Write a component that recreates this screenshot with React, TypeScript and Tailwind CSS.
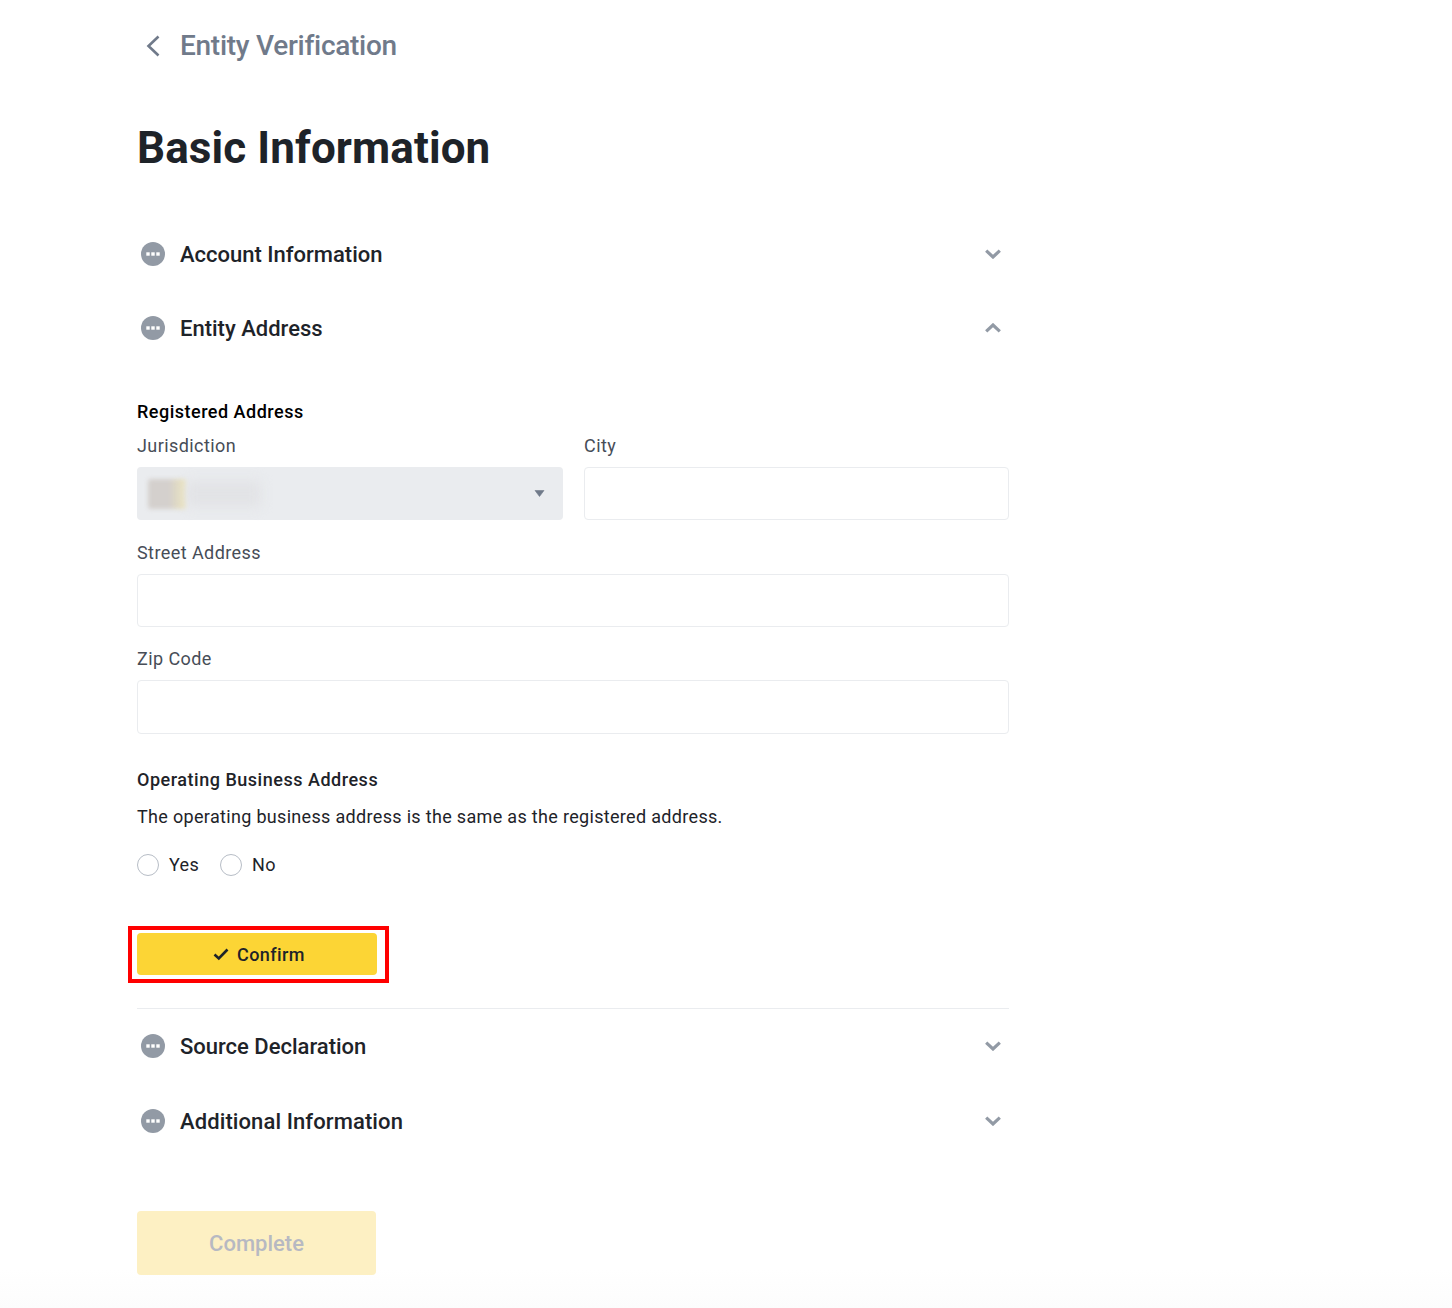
const F = "font-['Roboto','Liberation_Sans',sans-serif]";

function Dots() {
  return (
    <svg width="24" height="24" viewBox="0 0 24 24" className="shrink-0">
      <circle cx="12" cy="12" r="12" fill="#929aa5" />
      <rect x="5.3" y="10.3" width="3.4" height="3.4" fill="#fff" />
      <rect x="10.3" y="10.3" width="3.4" height="3.4" fill="#fff" />
      <rect x="15.3" y="10.3" width="3.4" height="3.4" fill="#fff" />
    </svg>
  );
}

function Chevron({ up }: { up?: boolean }) {
  return (
    <svg width="16" height="10" viewBox="0 0 16 10" className="shrink-0">
      <path d={up ? "M1.2 8.3L8 2L14.8 8.3" : "M1.2 1.7L8 8L14.8 1.7"} fill="none" stroke="#929aa5" strokeWidth="3.2" />
    </svg>
  );
}

function Section({ title, up, className }: { title: string; up?: boolean; className: string }) {
  return (
    <div className={`flex items-center pl-[4px] pr-[8px] ${className}`}>
      <Dots />
      <span className="ml-[15px] flex-1 pt-[2px] text-[22px] leading-[28px] font-medium text-[#1e2329]">{title}</span>
      <Chevron up={up} />
    </div>
  );
}

function Field({ label, className, boxClass }: { label: string; className?: string; boxClass?: string }) {
  return (
    <div className={className}>
      <div className="h-[22px] text-[18px] leading-[22px] tracking-[0.42px] text-[#474d57]">{label}</div>
      <div className={`mt-[10px] rounded-[4px] border border-[#eaecef] bg-white ${boxClass ?? "h-[53px]"}`} />
    </div>
  );
}

function Radio({ label }: { label: string }) {
  return (
    <div className="flex items-center">
      <span className="h-[22px] w-[22px] rounded-full border border-[#b7bdc6] bg-white" />
      <span className="ml-[10px] text-[18px] leading-[22px] tracking-[0.3px] text-[#1e2329]">{label}</span>
    </div>
  );
}

export default function App() {
  return (
    <div className={`${F} h-[1308px] w-[1452px] overflow-hidden bg-[linear-gradient(to_bottom,#ffffff_97%,#fcfcfc)] pl-[137px]`}>
      <div className="w-[872px]">
        <div className="mt-[32px] flex h-[28px] items-center pl-[9px]">
          <svg width="14" height="22" viewBox="0 0 14 22" className="shrink-0">
            <path d="M12.5 1.5L2.5 11L12.5 20.5" fill="none" stroke="#707a8a" strokeWidth="2.6" />
          </svg>
          <span className="ml-[20px] text-[28px] leading-[28px] font-medium tracking-[-0.27px] text-[#707a8a]">Entity Verification</span>
        </div>

        <h1 className="mt-[58px] text-[44px] leading-[60px] font-bold tracking-[0.1px] text-[#1e2329]">Basic Information</h1>

        <Section title="Account Information" className="mt-[62px] h-[28px]" />
        <Section title="Entity Address" up className="mt-[46px] h-[28px]" />

        <h2 className="mt-[58px] text-[18px] leading-[24px] font-medium tracking-[0.5px] text-black">Registered Address</h2>

        <div className="mt-[11px] grid grid-cols-[426px_425px] gap-x-[21px]">
          <div>
            <div className="h-[22px] text-[18px] leading-[22px] tracking-[0.42px] text-[#474d57]">Jurisdiction</div>
            <div className="mt-[10px] flex h-[53px] items-center rounded-[4px] bg-[#eaecef] pl-[11px] pr-[18px]">
              <div className="h-[30px] w-[38px] rounded-[3px] bg-[linear-gradient(90deg,#d4d0cd_55%,#eee5bb)] blur-[2px]" />
              <div className="h-[26px] w-[75px] bg-[#e2e3e6] blur-[6px]" />
              <svg width="11" height="7" viewBox="0 0 11 7" className="ml-auto">
                <path d="M1 0.5H10L5.5 6.5Z" fill="#707a8a" stroke="#707a8a" strokeWidth="0.6" strokeLinejoin="round" />
              </svg>
            </div>
          </div>
          <Field label="City" />
        </div>

        <Field label="Street Address" className="mt-[22px]" />
        <Field label="Zip Code" className="mt-[21px]" boxClass="h-[54px]" />

        <h2 className="mt-[34px] text-[18px] leading-[24px] font-medium tracking-[0.52px] text-[#1e2329]">Operating Business Address</h2>
        <p className="mt-[13px] text-[18px] leading-[24px] tracking-[0.32px] text-[#1e2329]">The operating business address is the same as the registered address.</p>

        <div className="mt-[25px] flex gap-x-[21px]">
          <Radio label="Yes" />
          <Radio label="No" />
        </div>

        <div className="ml-[-9px] mt-[50px] h-[57px] w-[261px] border-[4px] border-[#ff0000] pl-[5px] pt-[3px]">
          <button className="flex h-[42px] w-[240px] items-center justify-center rounded-[4px] bg-[#fcd535] pl-[4px] text-[18px] font-medium tracking-[0.4px] text-[#1e2329]">
            <svg width="16" height="14" viewBox="0 0 16 14" className="mr-[8px]">
              <path d="M1.5 7.5L5.8 11.5L14.5 2.5" fill="none" stroke="#1e2329" strokeWidth="2.6" />
            </svg>
            Confirm
          </button>
        </div>

        <div className="mt-[25px] border-t border-[#eaecef]" />

        <Section title="Source Declaration" className="mt-[23px] h-[28px]" />
        <Section title="Additional Information" className="mt-[47px] h-[28px] tracking-[0.1px]" />

        <button className="mt-[76px] h-[64px] w-[239px] rounded-[4px] bg-[#fdf0c3] text-[22px] font-medium text-[#b7b9c2]">Complete</button>
      </div>
    </div>
  );
}
